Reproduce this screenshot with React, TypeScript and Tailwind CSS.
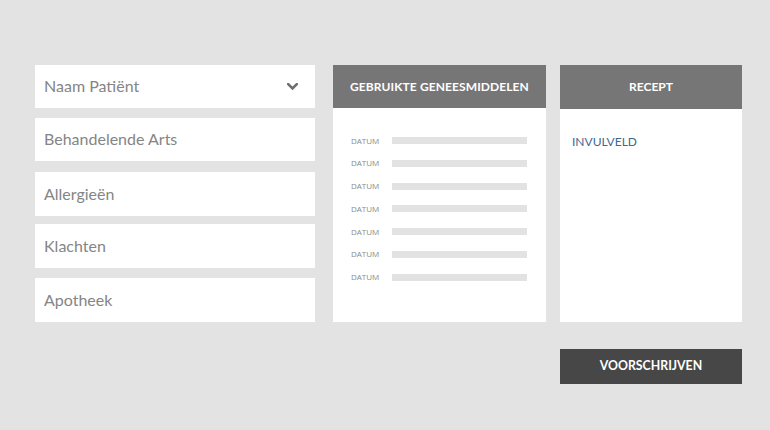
import React from "react";

const font = { fontFamily: '"Lato", "Open Sans", sans-serif' };

function Field({ label, chevron, className }: { label: string; chevron?: boolean; className: string }) {
  return (
    <div className={`flex items-center justify-between bg-white pl-[9px] pr-[17px] ${className}`}>
      <span className="text-[16px] text-[#858585] mb-[1px]">{label}</span>
      {chevron && (
        <svg width="11" height="7" viewBox="0 0 11 7" className="block">
          <path d="M1.2 1.2 L5.5 5.4 L9.8 1.2" fill="none" stroke="#6e6e6e" strokeWidth="2.6" strokeLinecap="square" />
        </svg>
      )}
    </div>
  );
}

export default function App() {
  const rows = [0, 1, 2, 3, 4, 5, 6];
  return (
    <div className="w-[770px] h-[430px] bg-[#e3e3e3] overflow-hidden" style={font}>
      <div className="flex pl-[35px] pt-[65px]">
        <div className="flex flex-col w-[280px]">
          <Field label="Naam Patiënt" chevron className="h-[43px]" />
          <Field label="Behandelende Arts" className="h-[43px] mt-[10px]" />
          <Field label="Allergieën" className="h-[44px] mt-[11px]" />
          <Field label="Klachten" className="h-[44px] mt-[8px]" />
          <Field label="Apotheek" className="h-[44px] mt-[10px]" />
        </div>
        <div className="ml-[18px] w-[213px] h-[257px] flex flex-col bg-white">
          <div className="h-[43px] bg-[#767676] flex items-center justify-center">
            <span className="text-white font-bold text-[12px] tracking-[0.1px]">GEBRUIKTE GENEESMIDDELEN</span>
          </div>
          <div className="flex flex-col pt-[29px] pl-[18px] gap-[15.8px]">
            {rows.map((r) => (
              <div key={r} className="flex items-center h-[7px]">
                <span className="w-[41px] text-[8px] text-[#8a8a8a] leading-none" style={{ fontFamily: '"Open Sans", sans-serif' }}>DATUM</span>
                <div className="w-[135px] h-[7px] bg-[#e2e2e2]" />
              </div>
            ))}
          </div>
        </div>
        <div className="ml-[14px] w-[182px] flex flex-col">
          <div className="h-[257px] flex flex-col bg-white">
            <div className="h-[44px] bg-[#767676] flex items-center justify-center">
              <span className="text-white font-bold text-[12px]">RECEPT</span>
            </div>
            <div className="pl-[12px] pt-[27px]">
              <div className="text-[12px] text-[#3f6890] leading-none">INVULVELD</div>
            </div>
          </div>
          <div className="mt-[27px] h-[35px] bg-[#474747] flex items-center justify-center">
            <span className="text-white font-bold text-[12.3px]">VOORSCHRIJVEN</span>
          </div>
        </div>
      </div>
    </div>
  );
}
